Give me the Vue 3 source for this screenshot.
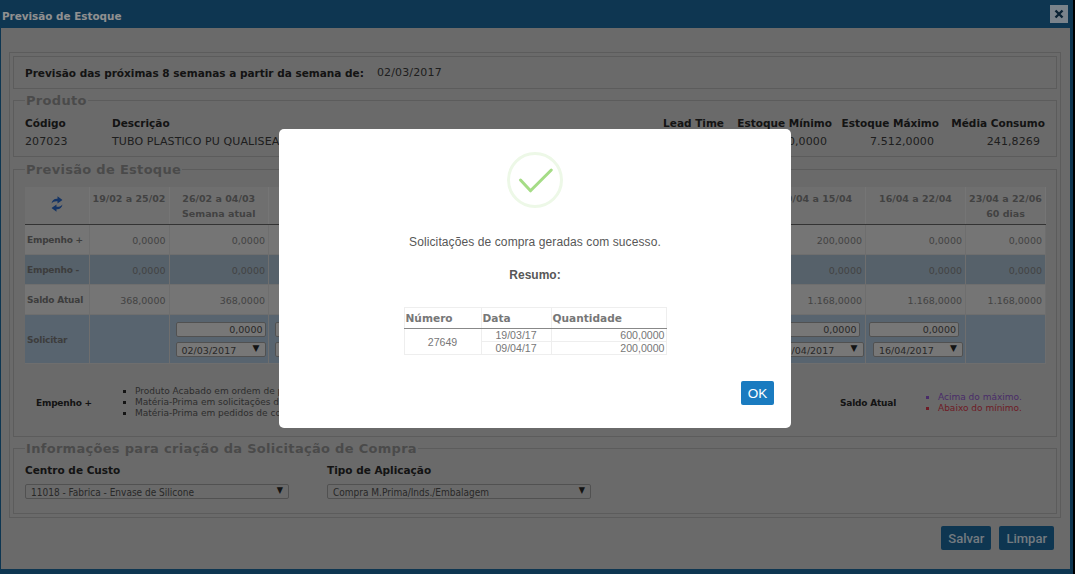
<script setup>
const weeks = [
  { label: '19/02 a 25/02', sub: '', plus: '0,0000', minus: '0,0000', saldo: '368,0000' },
  { label: '26/02 a 04/03', sub: 'Semana atual', plus: '0,0000', minus: '0,0000', saldo: '368,0000', date: '02/03/2017', early: true },
  { label: '05/03 a 11/03', sub: '', plus: '0,0000', minus: '0,0000', saldo: '368,0000', date: '05/03/2017', early: true },
  { label: '12/03 a 18/03', sub: '', plus: '0,0000', minus: '0,0000', saldo: '368,0000', date: '12/03/2017' },
  { label: '19/03 a 25/03', sub: '', plus: '600,0000', minus: '0,0000', saldo: '968,0000', date: '19/03/2017' },
  { label: '26/03 a 01/04', sub: '', plus: '0,0000', minus: '0,0000', saldo: '968,0000', date: '26/03/2017' },
  { label: '02/04 a 08/04', sub: '', plus: '0,0000', minus: '0,0000', saldo: '968,0000', date: '02/04/2017' },
  { label: '09/04 a 15/04', sub: '', plus: '200,0000', minus: '0,0000', saldo: '1.168,0000', date: '09/04/2017' },
  { label: '16/04 a 22/04', sub: '', plus: '0,0000', minus: '0,0000', saldo: '1.168,0000', date: '16/04/2017' },
  { label: '23/04 a 22/06', sub: '60 dias', plus: '0,0000', minus: '0,0000', saldo: '1.168,0000' }
];
</script>

<template>
  <div class="page">
    <div class="window">
      <header class="titlebar">
        <span class="title">Previsão de Estoque</span>
        <button class="close">
          <svg width="10" height="10" viewBox="0 0 10 10"><path d="M1.5 1.5l7 7M8.5 1.5l-7 7" stroke="#123a57" stroke-width="2.4" fill="none" /></svg>
        </button>
      </header>

      <div class="body">
        <div class="outer">
          <div class="box intro">
            <b>Previsão das próximas 8 semanas a partir da semana de:</b>
            <span>02/03/2017</span>
          </div>

          <fieldset class="box produto">
            <legend>Produto</legend>
            <div class="prod-grid">
              <b>Código</b><b>Descrição</b><b class="r">Lead Time</b><b class="r">Estoque Mínimo</b><b class="r">Estoque Máximo</b><b class="r">Média Consumo</b>
              <span>207023</span><span>TUBO PLASTICO PU QUALISEAL</span><span></span><span class="r v">3.000,0000</span><span class="r v">7.512,0000</span><span class="r v">241,8269</span>
            </div>
          </fieldset>

          <fieldset class="box previsao">
            <legend>Previsão de Estoque</legend>
            <table class="grid">
              <colgroup>
                <col style="width: 64px" />
                <col style="width: 80px" />
                <col v-for="n in 7" :key="n" style="width: 99.5px" />
                <col style="width: 100px" />
                <col style="width: 80px" />
              </colgroup>
              <thead>
                <tr>
                  <th class="refresh">
                    <svg width="12" height="16" viewBox="0 0 12 16">
                      <path d="M.5 7.500C1 4 3.500 2.500 6.500 2.800V.3L11.500 4 6.500 7.500V5.300C4 5 2 5.700.5 7.500z" fill="#2458a8" />
                      <path d="M11.500 8.500C11 12 8.500 13.500 5.500 13.200V15.700L.5 12 5.500 8.500V10.700C8 11 10 10.300 11.500 8.500z" fill="#2458a8" />
                    </svg>
                  </th>
                  <th v-for="w in weeks" :key="w.label">{{ w.label }}<br />{{ w.sub }}</th>
                </tr>
              </thead>
              <tbody>
                <tr class="light">
                  <td class="name">Empenho +</td>
                  <td v-for="w in weeks" :key="w.label" class="num">{{ w.plus }}</td>
                </tr>
                <tr class="blue">
                  <td class="name">Empenho -</td>
                  <td v-for="w in weeks" :key="w.label" class="num">{{ w.minus }}</td>
                </tr>
                <tr class="light">
                  <td class="name">Saldo Atual</td>
                  <td v-for="w in weeks" :key="w.label" class="num">{{ w.saldo }}</td>
                </tr>
                <tr class="blue ask">
                  <td class="name">Solicitar</td>
                  <td v-for="w in weeks" :key="w.label" :class="{ early: w.early }">
                    <template v-if="w.date">
                      <div class="field qty">0,0000</div>
                      <div class="field pick">{{ w.date }}<i>▼</i></div>
                    </template>
                  </td>
                </tr>
              </tbody>
            </table>

            <div class="notes">
              <b class="note-a">Empenho +</b>
              <ul class="note-list">
                <li>Produto Acabado em ordem de produção</li>
                <li>Matéria-Prima em solicitações de compra</li>
                <li>Matéria-Prima em pedidos de compra</li>
              </ul>
              <b class="note-b">Saldo Atual</b>
              <ul class="note-list limits">
                <li class="over">Acima do máximo.</li>
                <li class="under">Abaixo do mínimo.</li>
              </ul>
            </div>
          </fieldset>

          <fieldset class="box info">
            <legend>Informações para criação da Solicitação de Compra</legend>
            <div class="info-grid">
              <div>
                <b>Centro de Custo</b>
                <div class="combo">11018 - Fabrica - Envase de Silicone<i>▼</i></div>
              </div>
              <div>
                <b>Tipo de Aplicação</b>
                <div class="combo">Compra M.Prima/Inds./Embalagem<i>▼</i></div>
              </div>
            </div>
          </fieldset>
        </div>

        <div class="actions">
          <button>Salvar</button>
          <button>Limpar</button>
        </div>
      </div>
    </div>

    <div class="overlay">
      <div class="alert">
        <div class="icon">
          <svg width="56" height="56" viewBox="0 0 56 56">
            <circle cx="28" cy="28" r="26.500" fill="none" stroke="#edf8e7" stroke-width="3" />
            <path d="M13.500 28L23.500 38.800L44.300 18" fill="none" stroke="#a5dc86" stroke-width="3" stroke-linecap="round" stroke-linejoin="round" />
          </svg>
        </div>
        <p class="msg">Solicitações de compra geradas com sucesso.</p>
        <p class="resumo">Resumo:</p>
        <table class="summary">
          <colgroup>
            <col style="width: 77px" />
            <col style="width: 70px" />
            <col style="width: 115px" />
          </colgroup>
          <thead>
            <tr><th>Número</th><th>Data</th><th>Quantidade</th></tr>
          </thead>
          <tbody>
            <tr><td rowspan="2" class="c">27649</td><td class="c">19/03/17</td><td class="q">600,0000</td></tr>
            <tr><td class="c">09/04/17</td><td class="q">200,0000</td></tr>
          </tbody>
        </table>
        <div class="alert-actions"><button class="ok">OK</button></div>
      </div>
    </div>
  </div>
</template>

<style>
html, body {
  margin: 0;
  background: #000;
}
</style>

<style scoped>
.page {
  position: relative;
  width: 1075px;
  height: 574px;
  overflow: hidden;
  background: #000;
  font-family: "DejaVu Sans", Verdana, sans-serif;
  font-size: 11px;
  color: #555;
}
.window {
  width: 1073px;
  height: 574px;
  box-sizing: border-box;
  background: #185a87;
  padding: 0 3px 5px 1px;
  display: flex;
  flex-direction: column;
}
.titlebar {
  height: 28px;
  flex: none;
  display: flex;
  align-items: center;
  justify-content: space-between;
  margin-left: -1px;
  margin-right: -3px;
  padding: 0 5px 0 2px;
}
.title {
  color: #f0f0f0;
  font-weight: bold;
  font-size: 10.400px;
  margin-top: 4px;
}
.close {
  width: 18px;
  height: 18px;
  padding: 0;
  border: 0;
  background: #cbdbe8;
  display: flex;
  align-items: center;
  justify-content: center;
  margin-top: -1px;
}
.body {
  flex: 1;
  background: #b1b1b1;
  padding: 24px 9px 0 8px;
}
.outer {
  height: 466px;
  box-sizing: border-box;
  border: 1px solid #999;
  padding: 3px;
}
.box {
  border: 1px solid #999;
  margin: 0;
  box-sizing: border-box;
  min-width: 0;
}
legend {
  font-size: 13px;
  font-weight: bold;
  color: #7c7c7c;
  padding: 1px 1px 0;
  margin-bottom: -1px;
  line-height: 15px;
  letter-spacing: .3px;
}
fieldset.box {
  padding: 0 11px;
}
.intro {
  height: 33px;
  padding: 0 11px;
  display: flex;
  align-items: center;
  gap: 13px;
  color: #333;
  letter-spacing: .15px;
}
.intro b {
  color: #222;
  font-size: 10.500px;
  letter-spacing: 0;
}
.produto {
  height: 65px;
  margin-top: 3px !important;
}
.prod-grid {
  display: grid;
  grid-template-columns: 87px 1fr 90px 108px 107px 106px;
  grid-auto-rows: 18px;
  align-items: center;
  margin-top: 7px;
  color: #333;
  letter-spacing: .1px;
}
.prod-grid b {
  color: #222;
  font-size: 10.500px;
  letter-spacing: 0;
}
.r {
  text-align: right;
}
.v {
  padding-right: 5px;
}
.previsao {
  height: 276px;
  margin-top: 4px !important;
}
.grid {
  table-layout: fixed;
  border-collapse: collapse;
  width: 1020px;
  margin-top: 11px;
  font-size: 9.500px;
}
.grid th {
  height: 37px;
  box-sizing: border-box;
  background: #bababa;
  border-right: 1px solid #c4c4c4;
  border-bottom: 1px solid #555;
  font-size: 9.500px;
  line-height: 15px;
  color: #6e6e6e;
  font-weight: bold;
  padding: 4px 0 3px;
  vertical-align: top;
  text-align: center;
  white-space: nowrap;
}
.grid th.refresh {
  vertical-align: middle;
  padding: 0;
}
.grid td {
  border-right: 1px solid #b8b8b8;
  border-bottom: 1px solid #b8b8b8;
  padding: 1px 0 0;
  color: #707070;
  box-sizing: border-box;
}
.light td {
  background: #c3c3c3;
  height: 30px;
}
.blue td {
  background: #8fa2b1;
  height: 30px;
}
.ask td {
  height: 49px;
  background: #93a7ba;
  vertical-align: top;
  padding-top: 7px;
}
.grid td.name {
  font-weight: bold;
  font-size: 9px;
  letter-spacing: -.2px;
  color: #666;
  padding-left: 2px;
  white-space: nowrap;
}
.ask td.name {
  vertical-align: middle;
  padding-top: 1px;
}
.grid td.num {
  text-align: right;
  padding-right: 3px;
}
.field {
  box-sizing: border-box;
  width: 90px;
  height: 15px;
  border: 1px solid #888;
  border-radius: 2px;
  background: #c6c6c6;
  color: #444;
  line-height: 13px;
}
.qty {
  margin-left: 3px;
  text-align: right;
  padding-right: 2px;
}
.pick {
  margin: 5px 0 0 7px;
  padding-left: 5px;
  position: relative;
  line-height: 15px;
}
.early .qty,
.early .pick {
  margin-left: 6px;
}
.field i {
  position: absolute;
  right: 5px;
  top: -1px;
  font-style: normal;
  font-size: 9px;
  color: #222;
  line-height: 12px;
}
.notes {
  display: grid;
  grid-template-columns: 86px 729px 74px 1fr;
  align-items: center;
  margin-top: 22px;
  font-size: 9px;
  line-height: 11px;
  color: #4c4c4c;
}
.note-a {
  padding: 1px 0 0 11px;
  color: #222;
  letter-spacing: -.2px;
}
.note-b {
  padding-top: 1px;
  color: #222;
  letter-spacing: -.2px;
}
.note-list {
  margin: 0;
  padding: 0 0 0 24px;
  list-style: square;
}
.note-list li::marker {
  color: #222;
  font-size: 9px;
}
.note-list li.over,
.note-list li.over::marker {
  color: #7a4ab0;
}
.note-list li.under,
.note-list li.under::marker {
  color: #b83040;
}
.info {
  height: 74px;
  margin-top: 3px !important;
}
.info-grid {
  display: grid;
  grid-template-columns: 302px 264px;
  margin-top: 9px;
}
.info-grid b {
  color: #222;
  font-size: 10.500px;
}
.combo {
  position: relative;
  box-sizing: border-box;
  width: 264px;
  height: 15px;
  overflow: hidden;
  margin-top: 7px;
  border: 1px solid #888;
  border-radius: 2px;
  padding-left: 5px;
  font-size: 10px;
  font-stretch: condensed;
  line-height: 16px;
  color: #444;
}
.combo i {
  position: absolute;
  right: 5px;
  top: 0;
  font-style: normal;
  font-size: 9px;
  line-height: 10px;
  color: #222;
}
.actions {
  display: flex;
  justify-content: flex-end;
  gap: 8px;
  margin: 8px 7px 0 0;
}
.actions button {
  height: 24px;
  padding: 0 7px;
  border: 0;
  border-radius: 2px;
  background: #185a87;
  color: #c0ccd6;
  font-family: Roboto, sans-serif;
  font-weight: 500;
  font-size: 13px;
}
.overlay {
  position: absolute;
  inset: 0;
  background: rgba(0, 0, 0, .4);
  display: flex;
  align-items: flex-start;
  justify-content: center;
}
.alert {
  width: 512px;
  height: 299px;
  margin: 129px 5px 0 0;
  box-sizing: border-box;
  background: #fff;
  border-radius: 5px;
  padding-top: 23px;
  font-family: "Liberation Sans", Arial, sans-serif;
  color: #575757;
  display: flex;
  flex-direction: column;
  align-items: center;
}
.icon {
  height: 56px;
}
.msg {
  margin: 27px 0 0;
  font-size: 12px;
  line-height: 15px;
  letter-spacing: .1px;
}
.resumo {
  margin: 18px 0 0;
  font-size: 12px;
  font-weight: bold;
  line-height: 15px;
}
.summary {
  margin-top: 24px;
  border-collapse: collapse;
  table-layout: fixed;
  width: 262px;
  font-size: 10.600px;
  color: #777;
}
.summary th {
  height: 20px;
  padding: 0 1px;
  border: 1px solid #eee;
  border-bottom: 1px solid #888;
  font-family: "DejaVu Sans", Verdana, sans-serif;
  font-size: 10.600px;
  text-align: left;
  color: #777;
}
.summary td {
  height: 13px;
  box-sizing: border-box;
  line-height: 12px;
  padding: 0 1px;
  border: 1px solid #eee;
}
.summary .c {
  text-align: center;
}
.summary .q {
  text-align: right;
}
.alert-actions {
  align-self: stretch;
  display: flex;
  justify-content: flex-end;
  padding-right: 17px;
  margin-top: 26px;
}
.ok {
  width: 33px;
  height: 24px;
  padding: 0;
  border: 0;
  border-radius: 2px;
  background: #1a7bc0;
  color: #fff;
  font-family: "Liberation Sans", Arial, sans-serif;
  font-size: 13.500px;
}
</style>
